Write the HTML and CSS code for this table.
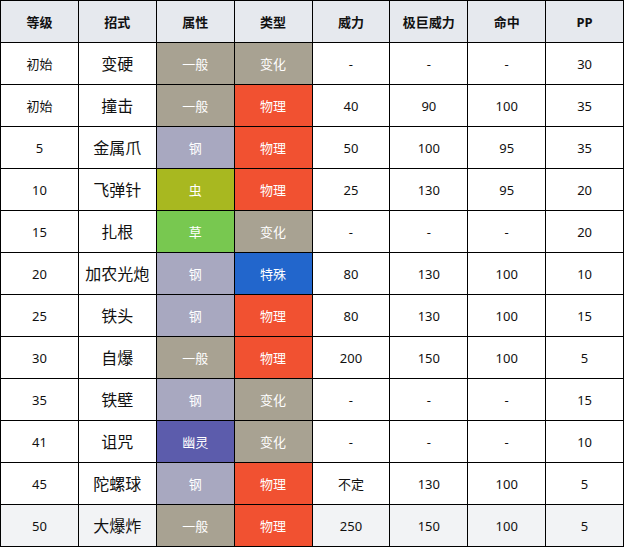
FILE: index.html
```html
<!DOCTYPE html>
<html lang="zh">
<head>
<meta charset="utf-8">
<title>招式表</title>
<link rel="stylesheet" href="styles.css">
</head>
<body>
<table class="moves">
  <thead>
    <tr><th>等级</th><th>招式</th><th>属性</th><th>类型</th><th>威力</th><th>极巨威力</th><th>命中</th><th>PP</th></tr>
  </thead>
  <tbody>
    <tr><td>初始</td><td class="name">变硬</td><td class="t normal">一般</td><td class="t status">变化</td><td>-</td><td>-</td><td>-</td><td>30</td></tr>
    <tr><td>初始</td><td class="name">撞击</td><td class="t normal">一般</td><td class="t physical">物理</td><td>40</td><td>90</td><td>100</td><td>35</td></tr>
    <tr><td>5</td><td class="name">金属爪</td><td class="t steel">钢</td><td class="t physical">物理</td><td>50</td><td>100</td><td>95</td><td>35</td></tr>
    <tr><td>10</td><td class="name">飞弹针</td><td class="t bug">虫</td><td class="t physical">物理</td><td>25</td><td>130</td><td>95</td><td>20</td></tr>
    <tr><td>15</td><td class="name">扎根</td><td class="t grass">草</td><td class="t status">变化</td><td>-</td><td>-</td><td>-</td><td>20</td></tr>
    <tr><td>20</td><td class="name">加农光炮</td><td class="t steel">钢</td><td class="t special">特殊</td><td>80</td><td>130</td><td>100</td><td>10</td></tr>
    <tr><td>25</td><td class="name">铁头</td><td class="t steel">钢</td><td class="t physical">物理</td><td>80</td><td>130</td><td>100</td><td>15</td></tr>
    <tr><td>30</td><td class="name">自爆</td><td class="t normal">一般</td><td class="t physical">物理</td><td>200</td><td>150</td><td>100</td><td>5</td></tr>
    <tr><td>35</td><td class="name">铁壁</td><td class="t steel">钢</td><td class="t status">变化</td><td>-</td><td>-</td><td>-</td><td>15</td></tr>
    <tr><td>41</td><td class="name">诅咒</td><td class="t ghost">幽灵</td><td class="t status">变化</td><td>-</td><td>-</td><td>-</td><td>10</td></tr>
    <tr><td>45</td><td class="name">陀螺球</td><td class="t steel">钢</td><td class="t physical">物理</td><td>不定</td><td>130</td><td>100</td><td>5</td></tr>
    <tr class="hl"><td>50</td><td class="name">大爆炸</td><td class="t normal">一般</td><td class="t physical">物理</td><td>250</td><td>150</td><td>100</td><td>5</td></tr>
  </tbody>
</table>
</body>
</html>
```
FILE: styles.css
```css
html, body {
  margin: 0;
  padding: 0;
  background: #ffffff;
}
body {
  font-family: "Noto Sans", "Noto Sans CJK SC", sans-serif;
  color: #111111;
}
.moves {
  width: 624px;
  border-collapse: collapse;
  table-layout: fixed;
  font-size: 13px;
}
.moves th,
.moves td {
  border: 1px solid #000000;
  height: 41px;
  padding: 0;
  text-align: center;
  vertical-align: middle;
  line-height: 18px;
}
.moves th {
  background: #e6e9ee;
  font-weight: bold;
  color: #111111;
}
.moves td.name {
  font-size: 16px;
}
.moves tr.hl td {
  background: #f2f3f5;
}
.moves td.t {
  color: #ffffff;
}
.moves tr.hl td.normal, .normal { background: #a8a292; }
.moves tr.hl td.physical, .physical { background: #f15131; }
.status { background: #a8a292; }
.steel { background: #a8a8c0; }
.bug { background: #a8b820; }
.grass { background: #78c850; }
.special { background: #2266cc; }
.ghost { background: #5c5cac; }
```
